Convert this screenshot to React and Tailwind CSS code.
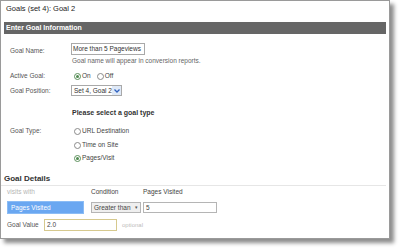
import React from "react";

function Radio({ checked }) {
  return (
    <span
      className={
        "inline-flex items-center justify-center w-[7px] h-[7px] rounded-full border bg-white " +
        (checked ? "border-[#5b8f5b]" : "border-[#8a8a8a]")
      }
    >
      {checked && <span className="w-[3px] h-[3px] rounded-full bg-[#4f8a4f]" />}
    </span>
  );
}

export default function App() {
  return (
    <div
      className="w-[400px] h-[249px] bg-white overflow-hidden text-[#333]"
      style={{ fontFamily: '"Liberation Sans", Arial, sans-serif' }}
    >
      <div className="w-[390px] h-[239px] border border-[#9a9a9a] bg-white shadow-[4px_4px_4px_rgba(0,0,0,0.45)] flex flex-col">
        {/* Title */}
        <div className="h-[21px] pl-[5px] pt-[3px] text-[7.5px] leading-[9px] text-[#222]">
          Goals (set 4): Goal 2
        </div>
        {/* Header bar */}
        <div className="mx-[3px] h-[12px] bg-[#666666] pl-[2px] text-[7px] leading-[12px] font-bold text-white">
          Enter Goal Information
        </div>

        {/* Form */}
        <div className="pl-[9px] text-[6.5px] text-[#555]">
          <div className="mt-[9px] flex items-center h-[12px]">
            <div className="w-[61px] pt-[3px]">Goal Name:</div>
            <div className="w-[74px] h-[12px] border border-[#a9a9a9] pl-[1px] leading-[10px] text-[#333] whitespace-nowrap overflow-hidden">
              More than 5 Pageviews
            </div>
          </div>
          <div className="ml-[62px] mt-[2px] leading-[8px] text-[#666] whitespace-nowrap">
            Goal name will appear in conversion reports.
          </div>

          <div className="mt-[6px] flex items-center h-[10px]">
            <div className="w-[64px]">Active Goal:</div>
            <Radio checked />
            <span className="ml-[1px] mr-[6px] text-[#444]">On</span>
            <Radio />
            <span className="ml-[1px] text-[#444]">Off</span>
          </div>

          <div className="mt-[4px] flex items-center h-[11px]">
            <div className="w-[61px]">Goal Position:</div>
            <div className="w-[51px] h-[11px] border border-[#a9a9a9] flex items-center">
              <span className="flex-1 pl-[2px] text-[#333] leading-[9px] whitespace-nowrap">Set 4, Goal 2</span>
              <span className="w-[9px] h-[9px] bg-[#dfe9f7] flex items-center justify-center">
                <svg width="6" height="4" viewBox="0 0 6 4">
                  <path d="M0.5 0.5 L3 3 L5.5 0.5" fill="none" stroke="#2f62c0" strokeWidth="1.3" />
                </svg>
              </span>
            </div>
          </div>

          <div className="mt-[12px] ml-[62px] h-[10px] leading-[10px] text-[7px] font-bold text-[#333]">
            Please select a goal type
          </div>

          <div className="mt-[8px] flex items-center h-[10px]">
            <div className="w-[64px]">Goal Type:</div>
            <Radio />
            <span className="ml-[1px] text-[#444]">URL Destination</span>
          </div>
          <div className="mt-[4px] flex items-center h-[10px] pl-[64px]">
            <Radio />
            <span className="ml-[1px] text-[#444]">Time on Site</span>
          </div>
          <div className="mt-[3px] flex items-center h-[10px] pl-[64px]">
            <Radio checked />
            <span className="ml-[1px] text-[#444]">Pages/Visit</span>
          </div>
        </div>

        {/* Goal Details */}
        <div className="mt-[11px] pl-[3px] h-[10px] leading-[10px] text-[8px] font-bold text-[#333]">
          Goal Details
        </div>
        <div className="mt-[1px] mr-[3px] h-px bg-[#e6e6e6]" />

        <div className="pl-[6px] text-[6.5px]">
          <div className="mt-[1px] flex h-[9px] items-center">
            <div className="w-[84px] text-[#b5b5b5]">visits with</div>
            <div className="w-[52px] text-[#444]">Condition</div>
            <div className="text-[#444]">Pages Visited</div>
          </div>
          <div className="mt-[5px] flex items-center h-[13px]">
            <div className="w-[77px] h-[13px] bg-[#6aa7f1] border border-[#8bbcf5] pl-[3px] leading-[11px] text-white">
              Pages Visited
            </div>
            <div className="ml-[7px] w-[50px] h-[11px] border border-[#b5b5b5] bg-[#efefef] flex items-center pl-[2px] text-[#444]">
              <span className="flex-1 leading-[9px] whitespace-nowrap">Greater than</span>
              <span className="pr-[2px] text-[5px] text-[#555]">▾</span>
            </div>
            <div className="ml-[2px] w-[74px] h-[11px] border border-[#b5b5b5] pl-[2px] leading-[9px] text-[#444]">
              5
            </div>
          </div>
          <div className="mt-[5px] flex items-center h-[12px]">
            <div className="w-[37px] text-[#555]">Goal Value</div>
            <div className="w-[73px] h-[12px] border border-[#d6c98e] pl-[2px] leading-[10px] text-[#444]">
              2.0
            </div>
            <div className="ml-[5px] text-[#bdbdbd] text-[6px]">optional</div>
          </div>
        </div>
      </div>
    </div>
  );
}
